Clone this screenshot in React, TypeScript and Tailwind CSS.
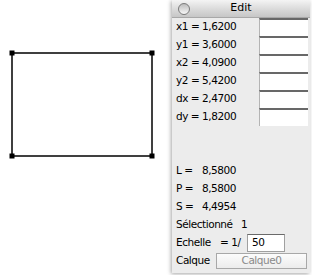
import React from "react";

const font = { fontFamily: '"DejaVu Sans", "Lucida Grande", sans-serif' };

function Row({ label, box }: { label: string; box?: boolean }) {
  return (
    <div className="flex h-[18px] items-center">
      <div className="flex-1 pl-[4px] text-[10.5px] tracking-[-0.45px] text-black">{label}</div>
      {box && (
        <div className="h-[18px] w-[49px] mr-[2px] bg-white border-t-2 border-t-[#686868] border-l border-l-[#b4b4b4]" />
      )}
    </div>
  );
}

export default function App() {
  return (
    <div className="flex w-[312px] h-[275px] bg-white overflow-hidden" style={font}>
      <div className="w-[172px] h-full">
        <svg width="172" height="275" className="block">
          <rect x="12" y="53" width="140" height="103" fill="none" stroke="#000" strokeWidth="1.5" />
          <rect x="9.5" y="50.5" width="5" height="5" fill="#000" />
          <rect x="149.5" y="50.5" width="5" height="5" fill="#000" />
          <rect x="9.5" y="153.5" width="5" height="5" fill="#000" />
          <rect x="149.5" y="153.5" width="5" height="5" fill="#000" />
        </svg>
      </div>
      <div className="w-[138px] h-[273px] flex flex-col bg-[#ececec] shadow-[-1px_1px_4px_rgba(0,0,0,0.35)] bg-[radial-gradient(#dedede_0.6px,transparent_0.6px)] bg-[length:4px_4px]">
        <div className="relative h-[18px] flex items-center justify-center bg-gradient-to-b from-[#f4f4f4] via-[#dcdcdc] to-[#c6c6c6] border-b border-b-[#a8a8a8]">
          <div className="absolute left-[6px] top-[3px] w-[12px] h-[12px] rounded-full border border-[#7a7a7a] bg-gradient-to-b from-[#bcbcbc] to-[#f8f8f8]" />
          <span className="text-[11px] text-black">Edit</span>
        </div>
        <Row label="x1 = 1,6200" box />
        <Row label="y1 = 3,6000" box />
        <Row label="x2 = 4,0900" box />
        <Row label="y2 = 5,4200" box />
        <Row label="dx = 2,4700" box />
        <Row label="dy = 1,8200" box />
        <div className="h-[36px]" />
        <div className="flex h-[18px] items-center pl-[4px] text-[10.5px] tracking-[-0.45px]">
          <span className="w-[26px]">L =</span>
          <span>8,5800</span>
        </div>
        <div className="flex h-[18px] items-center pl-[4px] text-[10.5px] tracking-[-0.45px]">
          <span className="w-[26px]">P =</span>
          <span>8,5800</span>
        </div>
        <div className="flex h-[18px] items-center pl-[4px] text-[10.5px] tracking-[-0.45px]">
          <span className="w-[26px]">S =</span>
          <span>4,4954</span>
        </div>
        <div className="flex h-[18px] items-center pl-[4px] text-[10.5px] tracking-[-0.45px]">
          <span className="w-[65px]">Sélectionné</span>
          <span>1</span>
        </div>
        <div className="flex h-[18px] items-center pl-[4px] text-[10.5px] tracking-[-0.45px]">
          <span className="w-[44px]">Echelle</span>
          <span className="w-[27px]">= 1/</span>
          <div className="h-[18px] w-[38px] bg-white border border-[#a0a0a0] border-t-[#6a6a6a] flex items-center pl-[4px]">50</div>
        </div>
        <div className="flex h-[18px] items-center pl-[4px] text-[10.5px] tracking-[-0.45px]">
          <span className="w-[40px]">Calque</span>
          <div className="h-[16px] w-[91px] flex items-center justify-center border border-[#a8a8a8] bg-gradient-to-b from-[#fcfcfc] to-[#ececec] text-[#8a8a8a]">Calque0</div>
        </div>
      </div>
    </div>
  );
}
